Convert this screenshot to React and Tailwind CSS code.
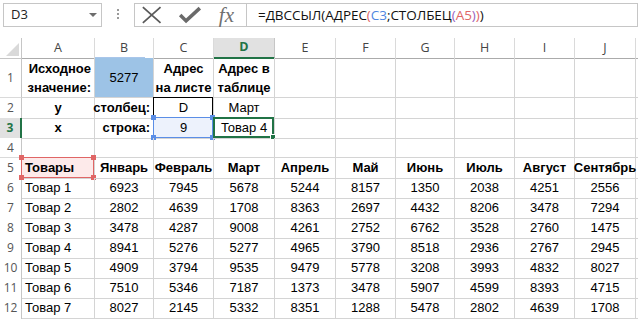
import React from "react";

const GRID =
  "grid grid-cols-[22px_73px_59px_60px_61px_61px_60px_59px_60px_60px_61px_1fr]";

const months = ["Январь", "Февраль", "Март", "Апрель", "Май", "Июнь", "Июль", "Август", "Сентябрь"];
const data = [
  ["Товар 1", 6923, 7945, 5678, 5244, 8157, 1350, 2038, 4251, 2556],
  ["Товар 2", 2802, 4639, 1708, 8363, 2697, 4432, 8206, 3478, 7294],
  ["Товар 3", 3478, 4287, 9008, 4261, 2752, 6762, 3528, 2760, 1475],
  ["Товар 4", 8941, 5276, 5277, 4965, 3790, 8518, 2936, 2767, 2945],
  ["Товар 5", 4909, 3794, 9535, 9479, 5778, 3208, 3993, 4832, 8027],
  ["Товар 6", 7510, 5346, 7187, 1373, 3478, 5907, 4599, 8393, 4715],
  ["Товар 7", 8027, 2145, 5332, 8351, 1288, 5478, 2802, 4639, 1708],
];

function RowHead({ n, active }) {
  return (
    <div
      className={
        "flex items-center justify-center border-b border-r text-[12px] font-['Open_Sans',sans-serif] " +
        (active
          ? "bg-[#e1e1e1] border-r-2 border-r-[#217346] border-b-[#c6c6c6] text-[#217346] font-bold"
          : "bg-white border-b-[#dadada] border-r-[#c6c6c6] text-[#555]")
      }
    >
      {n}
    </div>
  );
}

function Cell({ children, className = "", extra = null }) {
  return (
    <div
      className={
        "relative flex items-center border-b border-r border-[#d4d4d4] text-[13px] text-black px-[3px] whitespace-nowrap " +
        className
      }
    >
      {children}
      {extra}
    </div>
  );
}

function Handles({ color }) {
  const base = "absolute w-[5px] h-[5px] " + color;
  return (
    <>
      <span className={base + " -left-[3px] -top-[3px]"} />
      <span className={base + " -right-[3px] -top-[3px]"} />
      <span className={base + " -left-[3px] -bottom-[3px]"} />
      <span className={base + " -right-[3px] -bottom-[3px]"} />
    </>
  );
}

export default function App() {
  const colLetters = ["A", "B", "C", "D", "E", "F", "G", "H", "I", "J"];
  return (
    <div className="w-[638px] h-[319px] overflow-hidden bg-white font-['Liberation_Sans',sans-serif]">
      {/* Formula bar */}
      <div className="flex h-[38px] items-start pt-[3px] pl-[3px]">
        <div className="relative flex h-[24px] w-[99px] items-center border border-[#c6c6c6] pl-[7px] text-[13px] text-[#222] font-['Open_Sans',sans-serif]">
          D3
          <span className="absolute right-[4px] top-[9px] h-0 w-0 border-l-[4px] border-r-[4px] border-t-[4px] border-l-transparent border-r-transparent border-t-[#6d6d6d]" />
        </div>
        <div className="flex w-[32px] flex-col items-center gap-[2px] pt-[6px]">
          <span className="h-[2px] w-[2px] bg-[#9a9a9a]" />
          <span className="h-[2px] w-[2px] bg-[#9a9a9a]" />
          <span className="h-[2px] w-[2px] bg-[#9a9a9a]" />
        </div>
        <div className="flex h-[24px] w-[113px] items-center border border-[#c6c6c6]">
          <svg width="113" height="22" viewBox="0 0 113 22">
            <path d="M8 3 L26 19 M26 3 L8 19" stroke="#5a5a5a" strokeWidth="1.8" fill="none" />
            <path d="M46 11 L52 17 L66 4" stroke="#6a6a6a" strokeWidth="3.6" fill="none" strokeLinejoin="miter" />
          </svg>
        </div>
        <div className="relative -ml-[113px] flex h-[24px] w-[113px] items-center justify-end pr-[13px] pointer-events-none">
          <span className="font-['Liberation_Serif',serif] italic text-[21px] leading-none text-[#707070]">fx</span>
        </div>
        <div className="-ml-px flex h-[24px] flex-1 items-center border border-[#c6c6c6] pl-[11px] text-[13.5px] text-[#111] font-['Open_Sans',sans-serif] tracking-[-0.05px]">
          <span>=ДВССЫЛ(АДРЕС</span>
          <span className="text-[#e06666]">(</span>
          <span className="text-[#4f86e0]">C3</span>
          <span>;СТОЛБЕЦ</span>
          <span className="text-[#9b5fc0]">(</span>
          <span className="text-[#e06666]">A5</span>
          <span className="text-[#9b5fc0]">)</span>
          <span className="text-[#e06666]">)</span>
          <span>)</span>
        </div>
      </div>

      {/* Column headers */}
      <div className={GRID + " h-[20px]"}>
        <div className="relative border-b border-r border-[#c6c6c6]">
          <svg className="absolute right-[2px] bottom-[2px]" width="13" height="13" viewBox="0 0 13 13">
            <path d="M13 0 L13 13 L0 13 Z" fill="#d9d9d9" />
          </svg>
        </div>
        {colLetters.map((c) => (
          <div
            key={c}
            className={
              "relative flex items-center justify-center border-r text-[12.5px] font-['Open_Sans',sans-serif] " +
              (c === "D"
                ? "bg-[#e1e1e1] border-b-2 border-b-[#217346] border-r-[#c6c6c6] text-[#217346] font-bold"
                : "bg-white border-b border-b-[#ababab] border-r-[#dadada] text-[#444]")
            }
          >
            {c}
            {c === "B" && (
              <span className="absolute left-0 bottom-[-1px] h-[2px] w-[50px] bg-[#a9c6ea]" />
            )}
          </div>
        ))}
        <div className="border-b border-[#ababab]" />
      </div>

      {/* Row 1 */}
      <div className={GRID + " h-[40px]"}>
        <RowHead n={1} />
        <Cell className="justify-end text-right font-bold leading-[19px]">
          <div>Исходное<br />значение:</div>
        </Cell>
        <Cell className="justify-center bg-[#9dc3e6]">5277</Cell>
        <Cell className="justify-center text-center font-bold leading-[19px]">
          <div>Адрес<br />на листе</div>
        </Cell>
        <Cell className="justify-center text-center font-bold leading-[19px]">
          <div>Адрес в<br />таблице</div>
        </Cell>
        {Array.from({ length: 6 }).map((_, i) => (
          <Cell key={i} />
        ))}
        <div className="border-b border-[#d4d4d4]" />
      </div>

      {/* Row 2 */}
      <div className={GRID + " h-[20px]"}>
        <RowHead n={2} />
        <Cell className="justify-center font-bold">у</Cell>
        <Cell className="justify-end font-bold">столбец:</Cell>
        <Cell
          className="justify-center"
          extra={<span className="absolute -left-px -top-px right-0 bottom-0 border border-b-0 border-black" />}
        >
          D
        </Cell>
        <Cell className="justify-center">Март</Cell>
        {Array.from({ length: 6 }).map((_, i) => (
          <Cell key={i} />
        ))}
        <div className="border-b border-[#d4d4d4]" />
      </div>

      {/* Row 3 */}
      <div className={GRID + " h-[20px]"}>
        <RowHead n={3} active />
        <Cell className="justify-center font-bold">x</Cell>
        <Cell className="justify-end font-bold">строка:</Cell>
        <Cell
          className="justify-center bg-[#edf2fc]"
          extra={
            <span className="absolute -left-px -top-px right-0 bottom-0 border border-[#5b8ee6]">
              <Handles color="bg-[#5b8ee6]" />
            </span>
          }
        >
          9
        </Cell>
        <Cell
          className="justify-center"
          extra={
            <span className="absolute -left-[1px] -top-[1px] right-0 bottom-0 border-2 border-[#217346]">
              <span className="absolute -right-[4px] -bottom-[4px] h-[6px] w-[6px] bg-[#217346] border border-white" />
            </span>
          }
        >
          Товар 4
        </Cell>
        {Array.from({ length: 6 }).map((_, i) => (
          <Cell key={i} />
        ))}
        <div className="border-b border-[#d4d4d4]" />
      </div>

      {/* Row 4 */}
      <div className={GRID + " h-[20px]"}>
        <RowHead n={4} />
        {Array.from({ length: 10 }).map((_, i) => (
          <Cell key={i} />
        ))}
        <div className="border-b border-[#d4d4d4]" />
      </div>

      {/* Row 5 */}
      <div className={GRID + " h-[20px]"}>
        <RowHead n={5} />
        <Cell
          className="font-bold bg-[#fdeaea]"
          extra={
            <span className="absolute -left-px -top-px right-0 bottom-0 border border-[#e06666]">
              <Handles color="bg-[#e06666]" />
            </span>
          }
        >
          Товары
        </Cell>
        {months.map((m) => (
          <Cell key={m} className="justify-center font-bold">
            {m}
          </Cell>
        ))}
        <div className="border-b border-[#d4d4d4]" />
      </div>

      {data.map((row, ri) => (
        <div key={ri} className={GRID + " h-[20px]"}>
          <RowHead n={ri + 6} />
          {row.map((v, ci) => (
            <Cell key={ci} className={ci === 0 ? "" : "justify-center"}>
              {v}
            </Cell>
          ))}
          <div className="border-b border-[#d4d4d4]" />
        </div>
      ))}

      <div className={GRID + " h-[20px]"}>
        <RowHead n="" />
        {Array.from({ length: 10 }).map((_, i) => (
          <Cell key={i} />
        ))}
        <div className="border-b border-[#d4d4d4]" />
      </div>
    </div>
  );
}
